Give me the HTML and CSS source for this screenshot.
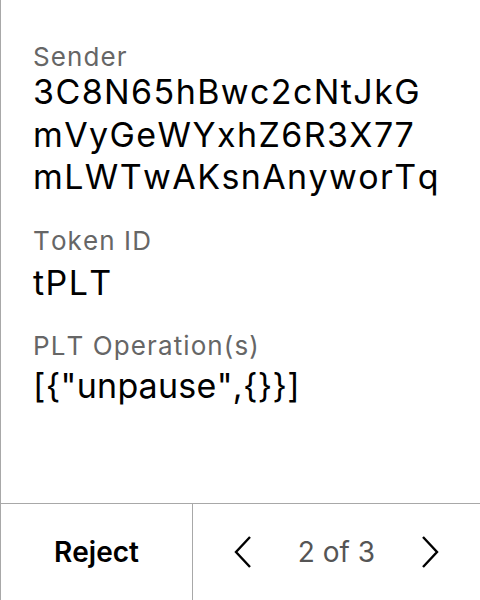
FILE: index.html
```html
<!DOCTYPE html>
<html>
<head>
<meta charset="utf-8">
<link rel="stylesheet" href="styles.css">
</head>
<body>
<div class="screen">
  <div class="details">
    <div class="field">
      <div class="label">Sender</div>
      <div class="value">3C8N65hBwc2cNtJkG<br>mVyGeWYxhZ6R3X77<br>mLWTwAKsnAnyworTq</div>
    </div>
    <div class="field field-token">
      <div class="label">Token ID</div>
      <div class="value">tPLT</div>
    </div>
    <div class="field field-ops">
      <div class="label">PLT Operation(s)</div>
      <div class="value">[{"unpause",{}}]</div>
    </div>
  </div>
  <div class="footer">
    <div class="reject">Reject</div>
    <div class="pager">
      <svg class="chev" width="18" height="32" viewBox="0 0 18 32"><path d="M16 1 L2 16 L16 31" fill="none" stroke="#000" stroke-width="2.4"/></svg>
      <span class="count">2 of 3</span>
      <svg class="chev" width="18" height="32" viewBox="0 0 18 32"><path d="M2 1 L16 16 L2 31" fill="none" stroke="#000" stroke-width="2.4"/></svg>
    </div>
  </div>
</div>
</body>
</html>
```

FILE: styles.css
```css
html, body {
  margin: 0;
  padding: 0;
  background: #fff;
}
body {
  font-family: Inter, "Noto Sans", sans-serif;
  color: #000;
  font-kerning: none;
}
.screen {
  width: 480px;
  height: 600px;
  box-sizing: border-box;
  border-left: 1px solid #a8a8a8;
  display: flex;
  flex-direction: column;
}
.details {
  flex: 1;
  padding: 43px 0 0 32px;
  display: flex;
  flex-direction: column;
  gap: 28px;
}
.label {
  font-size: 26px;
  line-height: 28px;
  letter-spacing: 1.1px;
  color: #666;
}
.value {
  font-size: 34px;
  line-height: 42.5px;
  letter-spacing: 1.4px;
  color: #000;
}
.field-token .value {
  margin-top: 7px;
}
.field-ops .value {
  margin-top: 5px;
  letter-spacing: 0.3px;
}
.footer {
  height: 96px;
  border-top: 1px solid #a8a8a8;
  display: flex;
}
.reject {
  width: 191px;
  border-right: 1px solid #a8a8a8;
  display: flex;
  align-items: center;
  justify-content: center;
  font-size: 28px;
  font-weight: 600;
}
.pager {
  flex: 1;
  display: flex;
  align-items: center;
  justify-content: space-between;
  padding: 0 41px;
}
.count {
  font-size: 28px;
  color: #555;
}
```
